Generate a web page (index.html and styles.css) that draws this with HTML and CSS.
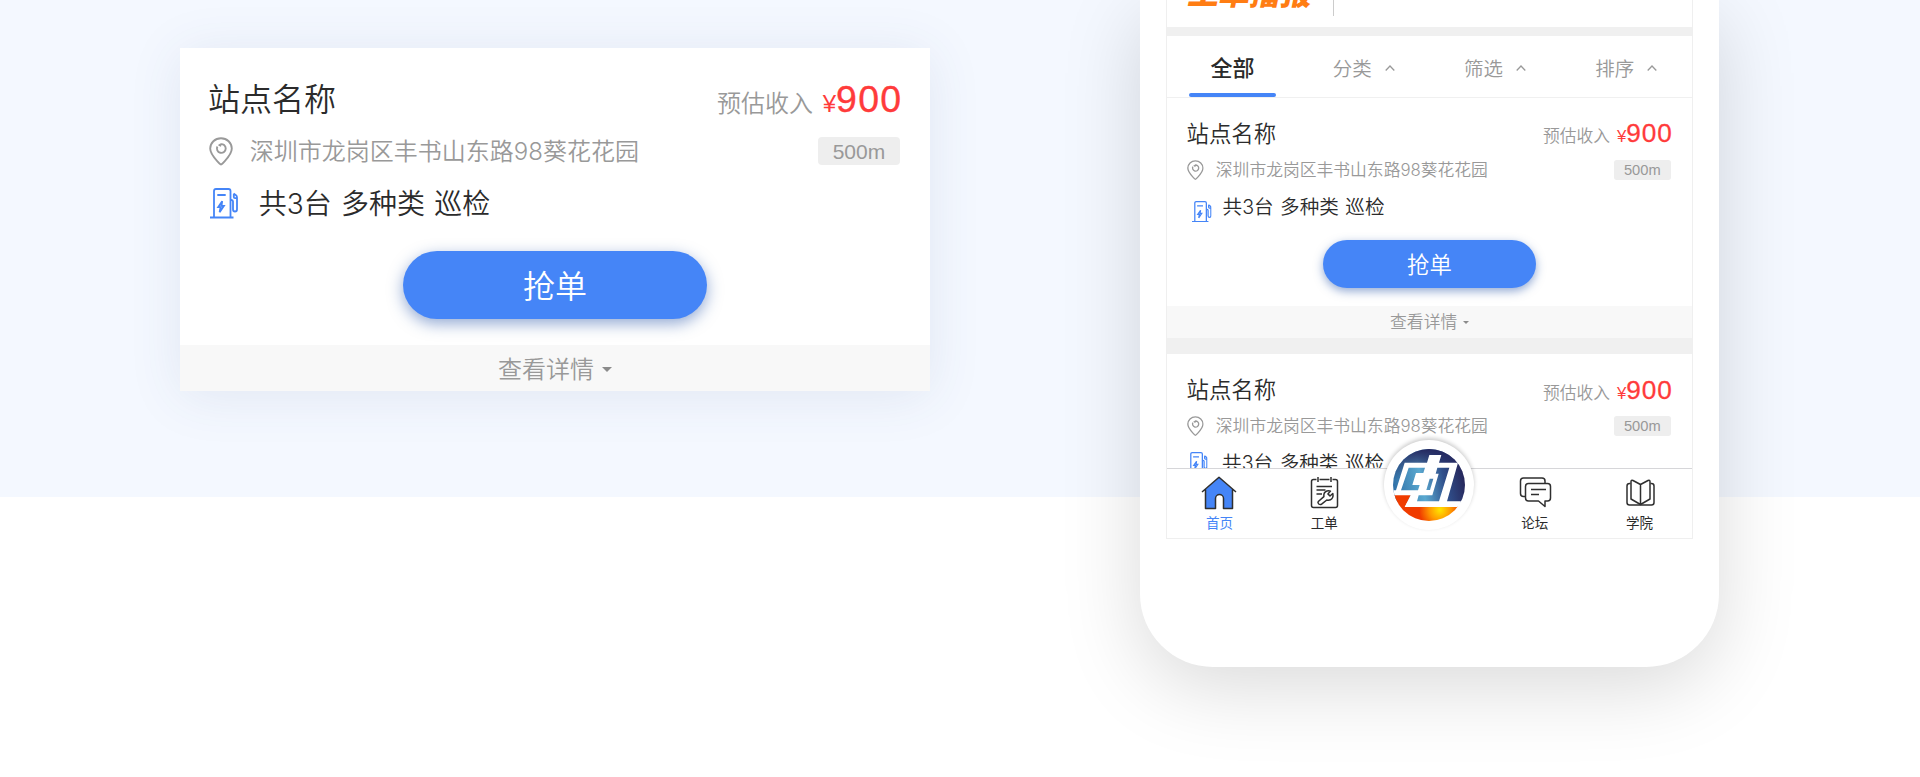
FILE: index.html
```html
<!DOCTYPE html>
<html lang="zh-CN">
<head>
    <meta charset="UTF-8">
    <meta name="viewport" content="width=device-width, initial-scale=1.0">
    <title>抢单</title>
    <link rel="stylesheet" href="styles.css">
</head>
<body>
    <!-- Shared icons -->
    <svg class="sprite" aria-hidden="true">
        <symbol id="icon-pin" viewBox="0 0 24 29">
            <path d="M12 1.200C6 1.200 1.200 5.800 1.200 11.600c0 6.200 5.300 10.400 9.400 15.100q1.400 1.600 2.800 0c4.100-4.700 9.400-8.900 9.400-15.100C22.800 5.800 18 1.200 12 1.200z"/>
            <path d="M8.400 9.500a4.400 4.400 0 1 0 3-2.300M9.600 7.600l2.600 1.400"/>
        </symbol>
        <symbol id="icon-fuel" viewBox="0 0 28 31">
            <path d="M0 29.500H23.500M4 29.500V3q0-2 2-2h12.500q2 0 2 2v26.500M7.300 7h8.400"/>
            <path d="M20.500 12h1q1.500 0 1.500 1.600v7.600q0 2.300 2 2.300t2-2.300V9.500q0-1.500-1-2.200L23.500 5.500M23.800 6v3q0 1.200 1.200 1.200h2"/>
            <path class="bolt" d="M12.200 13.200L8.200 19.200h2.400L9.600 24.200l4.300-6.400h-2.400z"/>
        </symbol>
    </svg>

    <section class="hero">
        <div class="card">
            <div class="card-row card-head">
                <h2 class="card-title">站点名称</h2>
                <div class="income">预估收入<span class="currency">¥</span><span class="amount">900</span></div>
            </div>
            <div class="card-row card-address">
                <svg class="pin"><use href="#icon-pin"/></svg>
                <span class="address">深圳市龙岗区丰书山东路98葵花花园</span>
                <span class="distance">500m</span>
            </div>
            <div class="card-row card-job">
                <svg class="fuel"><use href="#icon-fuel"/></svg>
                <span class="job">共3台 多种类 巡检</span>
            </div>
            <button class="grab-btn">抢单</button>
            <div class="card-footer">查看详情<i class="arrow-down"></i></div>
        </div>

        <div class="phone">
            <div class="screen">
                <div class="notice">
                    <span class="notice-logo">工单播报</span>
                </div>

                <div class="tabs">
                    <div class="tab active">全部</div>
                    <div class="tab">分类<svg class="caret" viewBox="0 0 10 6"><path d="M.7 5.500L5 1l4.300 4.500"/></svg></div>
                    <div class="tab">筛选<svg class="caret" viewBox="0 0 10 6"><path d="M.7 5.500L5 1l4.300 4.500"/></svg></div>
                    <div class="tab">排序<svg class="caret" viewBox="0 0 10 6"><path d="M.7 5.500L5 1l4.300 4.500"/></svg></div>
                </div>

                <div class="list">
                    <div class="card small first">
                        <div class="card-row card-head">
                            <h2 class="card-title">站点名称</h2>
                            <div class="income">预估收入<span class="currency">¥</span><span class="amount">900</span></div>
                        </div>
                        <div class="card-row card-address">
                            <svg class="pin"><use href="#icon-pin"/></svg>
                            <span class="address">深圳市龙岗区丰书山东路98葵花花园</span>
                            <span class="distance">500m</span>
                        </div>
                        <div class="card-row card-job">
                            <svg class="fuel"><use href="#icon-fuel"/></svg>
                            <span class="job">共3台 多种类 巡检</span>
                        </div>
                        <button class="grab-btn">抢单</button>
                        <div class="card-footer">查看详情<i class="arrow-down"></i></div>
                    </div>
                    <div class="card small">
                        <div class="card-row card-head">
                            <h2 class="card-title">站点名称</h2>
                            <div class="income">预估收入<span class="currency">¥</span><span class="amount">900</span></div>
                        </div>
                        <div class="card-row card-address">
                            <svg class="pin"><use href="#icon-pin"/></svg>
                            <span class="address">深圳市龙岗区丰书山东路98葵花花园</span>
                            <span class="distance">500m</span>
                        </div>
                        <div class="card-row card-job">
                            <svg class="fuel"><use href="#icon-fuel"/></svg>
                            <span class="job">共3台 多种类 巡检</span>
                        </div>
                    </div>
                </div>

                <div class="tabbar">
                    <div class="tabbar-item active">
                        <svg class="nav-icon" viewBox="0 0 36 34">
                            <path class="fill" d="M4.500 13.500V32.500H14.500V22.500a4 4 0 0 1 8 0V32.500H31.500V13.500L18 1.200z"/>
                            <path d="M1 16L18 1.200 35 16M4.500 13.500V32.500H14.500V22.500a4 4 0 0 1 8 0V32.500H31.500V13.500"/>
                        </svg>
                        <span>首页</span>
                    </div>
                    <div class="tabbar-item">
                        <svg class="nav-icon" viewBox="0 0 36 34">
                            <path d="M10.500 3.500H7.500q-2 0-2 2V29.500q0 2 2 2H29.500q2 0 2-2V5.500q0-2-2-2H26.500M13.500 3.500H23.500M12 1v5M25 1v5M10.500 10.500H26M10.500 14H19.500M10.500 18H16"/>
                            <path d="M12.300 25.500l5.600-4.900q-.6-4.300 3-5.600 2-.7 3.600.1l-2.600 2.800 2.100 2.100 2.800-2.500q1 4.600-2.400 6.300-1.600.7-3.600.2l-5.200 4.200q-1.400.9-2.800-.2-1.400-1.300-.5-2.500z"/>
                        </svg>
                        <span>工单</span>
                    </div>
                    <div class="tabbar-item center">
                        <div class="brand">
                            <svg viewBox="69 57 216 216">
                                <defs>
                                    <linearGradient id="brandBlue" gradientUnits="userSpaceOnUse" x1="69" y1="175" x2="285" y2="130">
                                        <stop offset="0" stop-color="#2f6fa6"/>
                                        <stop offset=".4" stop-color="#5aa9d0"/>
                                        <stop offset=".7" stop-color="#30508c"/>
                                        <stop offset="1" stop-color="#262457"/>
                                    </linearGradient>
                                    <linearGradient id="brandShade" gradientUnits="userSpaceOnUse" x1="0" y1="57" x2="0" y2="150">
                                        <stop offset="0" stop-color="#25285f"/>
                                        <stop offset="1" stop-color="#25285f" stop-opacity="0"/>
                                    </linearGradient>
                                    <radialGradient id="brandFire" gradientUnits="userSpaceOnUse" cx="210" cy="240" r="62">
                                        <stop offset="0" stop-color="#ffe500"/>
                                        <stop offset=".5" stop-color="#ff9a00"/>
                                        <stop offset="1" stop-color="#f03c00"/>
                                    </radialGradient>
                                    <clipPath id="brandClip"><circle cx="177" cy="165" r="108"/></clipPath>
                                </defs>
                                <g clip-path="url(#brandClip)">
                                    <path fill="url(#brandBlue)" d="M69 57h216v160H69z"/>
                                    <path fill="url(#brandShade)" d="M69 57h216v160H69z"/>
                                    <path fill="url(#brandFire)" d="M69 195H122L106 229H285V273H69z"/>
                                    <path fill="#fff" d="M104 98H171L178 75H214L207 98H264L231 214H279L273 231H104L122 196H69V181H78z"/>
                                    <g fill="url(#brandBlue)">
                                        <path d="M116 113H165L160 129H138L127 165H149L144 181H93z"/>
                                        <path d="M202 113H238L207 214H141L146 196H187L206 131H197z"/>
                                        <path d="M179 146H190L180 180H169z"/>
                                    </g>
                                </g>
                            </svg>
                        </div>
                    </div>
                    <div class="tabbar-item">
                        <svg class="nav-icon" viewBox="0 0 36 34">
                            <path d="M8.500 20.500H6.500q-3 0-3-3V5q0-3 3-3H25q3 0 3 3V7.500"/>
                            <path d="M11.500 7.500H30.500q3 0 3 3V22q0 3-3 3H28V30.500L21.500 25H11.500q-3 0-3-3V10.500q0-3 3-3zM14 13.500H29M14 18.500H22"/>
                        </svg>
                        <span>论坛</span>
                    </div>
                    <div class="tabbar-item">
                        <svg class="nav-icon" viewBox="0 0 36 34">
                            <path d="M8.500 7.500H7.500q-2.500 0-2.500 2.500V26.500q0 2.500 2.500 2.500H29.500q2.500 0 2.500-2.500V10q0-2.500-2.500-2.500H28.500"/>
                            <path d="M18.500 8.500L11 4.500q-2-.8-2 1.200V23L18.500 28.500 28 23V5.700q0-2-2-1.200L18.500 8.500V28.500"/>
                        </svg>
                        <span>学院</span>
                    </div>
                </div>
            </div>
        </div>
    </section>
</body>
</html>
```

FILE: styles.css
```css
* {
    margin: 0;
    padding: 0;
    box-sizing: border-box;
}

body {
    font-family: "Liberation Sans", "Noto Sans CJK SC", sans-serif;
    font-weight: 350;
    background: #fff;
    color: #2b2b2b;
    height: 777px;
    overflow: hidden;
}

.sprite {
    display: none;
}

.hero {
    display: flex;
    align-items: flex-start;
    height: 497px;
    padding-left: 180px;
    background: #f4f8ff;
}

/* Order card, every size inside is in em so it scales with font-size */
.card {
    font-size: 10px;
    width: 75em;
    margin-top: 48px;
    background: #fff;
    box-shadow: 0 5px 50px rgba(60, 80, 130, 0.1);
    flex-shrink: 0;
}

.card-row {
    display: flex;
    align-items: center;
    padding: 0 2.9em 0 2.8em;
}

.card-head {
    height: 7.6em;
    padding-top: 2.7em;
    justify-content: space-between;
}

.card-title {
    font-size: 3.2em;
    font-weight: 350;
    line-height: 1.5;
}

.income,
.address,
.job,
.distance {
    white-space: nowrap;
}

.income {
    display: flex;
    align-items: baseline;
    padding-top: 0.17em;
    font-size: 2.4em;
    line-height: 2em;
    color: #999;
}

.currency {
    margin-left: 0.41em;
    color: #ff3b3b;
}

.amount {
    font-size: 1.56em;
    letter-spacing: 0.035em;
    margin-right: -0.04em;
    color: #ff3b3b;
    -webkit-text-stroke: 0.01em #ff3b3b;
}

.card-address {
    height: 5.2em;
    padding-top: 0.2em;
}

.pin {
    width: 2.4em;
    height: 2.9em;
    margin-left: 0.1em;
    fill: none;
    stroke: #999;
    stroke-width: 1.9;
}

.address {
    margin-left: 0.7em;
    padding-top: 0.04em;
    font-family: Inter, "Noto Sans CJK SC", sans-serif;
    font-size: 2.4em;
    line-height: 1.4;
    color: #999;
}

.distance {
    margin-left: auto;
    margin-right: 0.05em;
    width: 3.905em;
    height: 1.333em;
    line-height: 1.43em;
    font-size: 2.1em;
    text-align: center;
    color: #999;
    background: #eee;
    border-radius: 0.19em;
}

.card-job {
    height: 5.2em;
    padding-top: 0.2em;
}

.fuel {
    width: 2.8em;
    height: 3.1em;
    margin-left: 0.2em;
    fill: none;
    stroke: #4585f7;
    stroke-width: 1.8;
}

.fuel .bolt {
    fill: #4585f7;
    stroke: none;
}

.job {
    margin-left: 0.74em;
    padding-top: 0.1em;
    font-family: Inter, "Noto Sans CJK SC", sans-serif;
    font-size: 2.8em;
    line-height: 1.4;
    word-spacing: 0.05em;
}

.grab-btn {
    display: block;
    width: 9.47em;
    height: 2.125em;
    margin: 0.72em auto 0;
    padding-bottom: 0.06em;
    border: none;
    border-radius: 1.1em;
    background: #4585f7;
    color: #fff;
    font-family: inherit;
    font-weight: 350;
    font-size: 3.2em;
    box-shadow: 0 0.15em 0.45em rgba(40, 85, 170, 0.5);
}

.card-footer {
    display: flex;
    align-items: center;
    justify-content: center;
    height: 1.917em;
    margin-top: 1.083em;
    padding-bottom: 0.08em;
    background: #f8f8f8;
    color: #999;
    font-size: 2.4em;
}

.arrow-down {
    margin: 0.2em 0 0 0.34em;
    border: 0.22em solid transparent;
    border-top-color: #8b8b8b;
    border-bottom: 0;
}

/* Phone */
.phone {
    width: 579px;
    height: 667px;
    margin-left: 210px;
    padding-left: 26px;
    flex-shrink: 0;
    background: #fff;
    border-radius: 0 0 73px 73px;
    box-shadow: 0 20px 80px rgba(0, 0, 0, 0.15);
}

.screen {
    display: flex;
    flex-direction: column;
    width: 527px;
    height: 539px;
    border: 1px solid #efefef;
    border-top: none;
}

.notice {
    position: relative;
    height: 36px;
    padding-left: 21px;
    border-bottom: 9px solid #f0f0f0;
    flex-shrink: 0;
}

.notice::after {
    content: "";
    display: block;
    width: 1px;
    height: 16px;
    margin-left: 145px;
    background: #ccc;
}

.notice-logo {
    position: absolute;
    left: 22px;
    bottom: 16px;
    line-height: 32px;
    font-size: 31px;
    font-weight: 900;
    color: #ff7d13;
    transform: skewX(-12deg);
}

.tabs {
    display: flex;
    height: 62px;
    border-bottom: 1px solid #f0f0f0;
    flex-shrink: 0;
}

.tab {
    position: relative;
    display: flex;
    align-items: center;
    justify-content: center;
    flex: 1;
    padding-top: 2px;
    font-size: 19.5px;
    color: #999;
}

.tab.active {
    padding: 0 0 1px;
    font-size: 22px;
    font-weight: 500;
    color: #2b2b2b;
}

.tab.active::after {
    content: "";
    position: absolute;
    left: 22px;
    right: 22px;
    bottom: 0;
    height: 4px;
    border-radius: 2px;
    background: #4585f7;
}

.caret {
    width: 10px;
    height: 6px;
    margin-left: 13px;
    fill: none;
    stroke: #999;
    stroke-width: 1.3;
}

.list {
    flex: 1;
    min-height: 0;
    overflow: hidden;
}

.card.small {
    font-size: 7px;
    width: 100%;
    margin-top: 0;
    box-shadow: none;
}

.card.small.first {
    border-bottom: 16px solid #f0f0f0;
}

.small .card-head {
    padding-top: 3em;
}

.small .income {
    padding-top: 0.08em;
}

.first .fuel {
    margin: 1.4em 0 0 0.8em;
}

.first .job {
    margin-left: 0.55em;
}

.tabbar {
    display: flex;
    height: 70px;
    border-top: 1px solid #d6d6d9;
    flex-shrink: 0;
}

.tabbar-item {
    flex: 1;
    display: flex;
    flex-direction: column;
    align-items: center;
    padding-top: 7px;
    font-size: 13.5px;
    line-height: 20px;
    font-weight: 400;
}

.tabbar-item.active {
    color: #4585f7;
}

.nav-icon {
    width: 36px;
    height: 34px;
    margin-bottom: 4px;
    fill: none;
    stroke: #2f2f2f;
    stroke-width: 1.5;
    stroke-linejoin: round;
}

.nav-icon .fill {
    fill: #4585f7;
    stroke: none;
}

.tabbar-item.center {
    padding: 0 1px 0 0;
}

.brand {
    width: 90px;
    height: 90px;
    margin-top: -29px;
    padding: 9px;
    border-radius: 50%;
    background: #fff;
    box-shadow: 0 -2px 4px rgba(0, 0, 0, 0.2);
    flex-shrink: 0;
}

.brand svg {
    display: block;
    width: 72px;
    height: 72px;
}
```
